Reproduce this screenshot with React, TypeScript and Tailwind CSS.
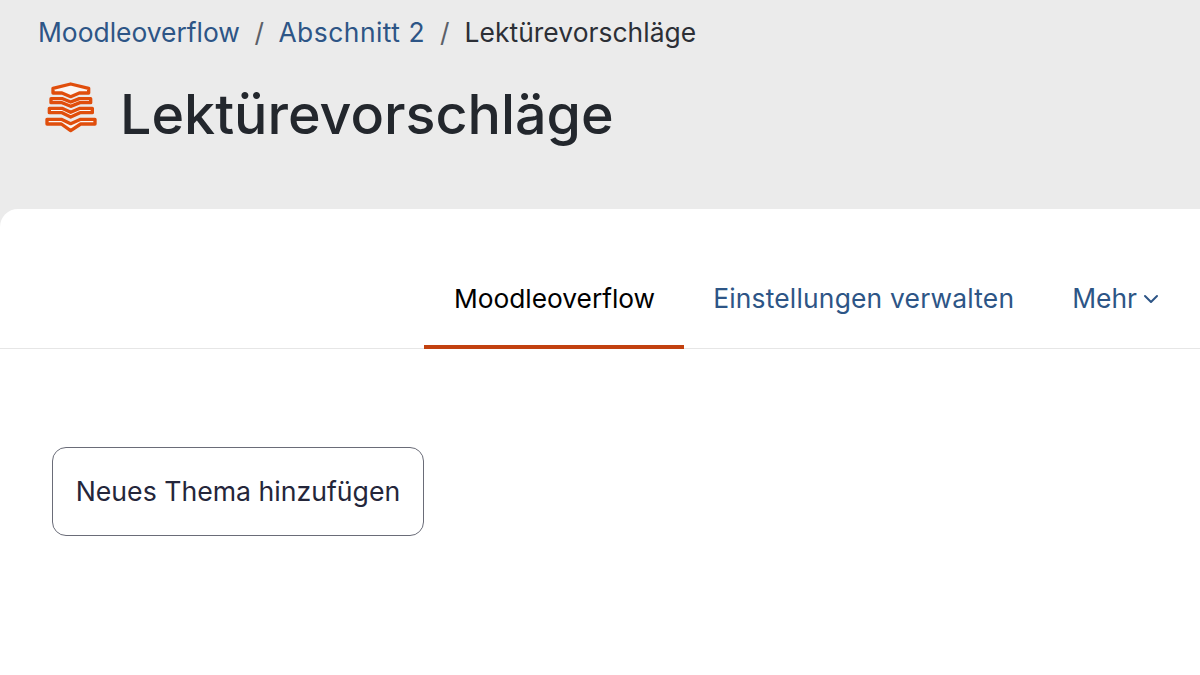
import { ChevronDown } from 'lucide-react'

const font = { fontFamily: 'Inter, sans-serif' }

function ModIcon() {
  return (
    <svg className="-ml-[8px] shrink-0" width="80" height="70" viewBox="0 0 240 210" fill="#fbf6f3" stroke="#e04e0c" strokeWidth="10" strokeLinejoin="round">
      <path d="M69 55 L122 42 L176 55 L176 69 L148 69 L122 80 L96 69 L69 69 Z" />
      <path d="M63 86 L98 86 L122 96 L148 86 L182 86 L182 98 L150 98 L122 109 L96 98 L63 98 Z" />
      <path d="M58 115 L96 115 L122 127 L150 115 L187 115 L187 128 L150 128 L122 141 L96 128 L58 128 Z" />
      <path d="M51 148 L94 148 L122 161 L152 148 L195 148 L195 162 L152 162 L122 182 L94 162 L51 162 Z" />
    </svg>
  )
}

export default function App() {
  return (
    <div className="h-[675px] w-[1200px] overflow-hidden bg-[#ebebeb]" style={font}>
      <div className="h-[209px] px-[38px] pt-[15px]">
        <div className="flex h-[36px] items-center text-[26.4px] text-[#2d5586]">
          <span>Moodleoverflow</span>
          <span className="mx-[14.5px] text-[#5b6068]">/</span>
          <span className="tracking-[0.5px]">Abschnitt 2</span>
          <span className="mx-[15px] text-[#5b6068]">/</span>
          <span className="tracking-[0.05px] text-[#2c2f36]">Lektürevorschläge</span>
        </div>
        <div className="mt-[19px] flex h-[70px] items-center">
          <ModIcon />
          <h1 className="ml-[10px] mt-[18px] text-[55.6px] leading-[70px] font-medium text-[#23272d]">Lektürevorschläge</h1>
        </div>
      </div>

      <div className="h-[466px] rounded-tl-[18px] bg-white">
        <nav className="flex h-[140px] items-end justify-end border-b border-[#e6e6e6] pr-[37px] text-[26.4px]">
          <a className="-mb-px flex h-[79px] items-center border-b-[4px] border-[#c2410f] pl-[30px] pr-[29px] pb-[17px] text-[26.3px] text-black">Moodleoverflow</a>
          <a className="flex h-[79px] items-center px-[29px] pb-[20px] tracking-[0.2px] text-[#2d5586]">Einstellungen verwalten</a>
          <a className="flex h-[79px] items-center pl-[29px] pb-[20px] text-[#2d5586]">
            Mehr
            <ChevronDown className="ml-[2px] mt-[1px] h-[24px] w-[24px]" strokeWidth={2} />
          </a>
        </nav>
        <div className="px-[52px] pt-[98px]">
          <button className="h-[89px] w-[372px] rounded-[14px] border border-[#6a6c78] text-[26.66px] text-[#24263a]">
            Neues Thema hinzufügen
          </button>
        </div>
      </div>
    </div>
  )
}
